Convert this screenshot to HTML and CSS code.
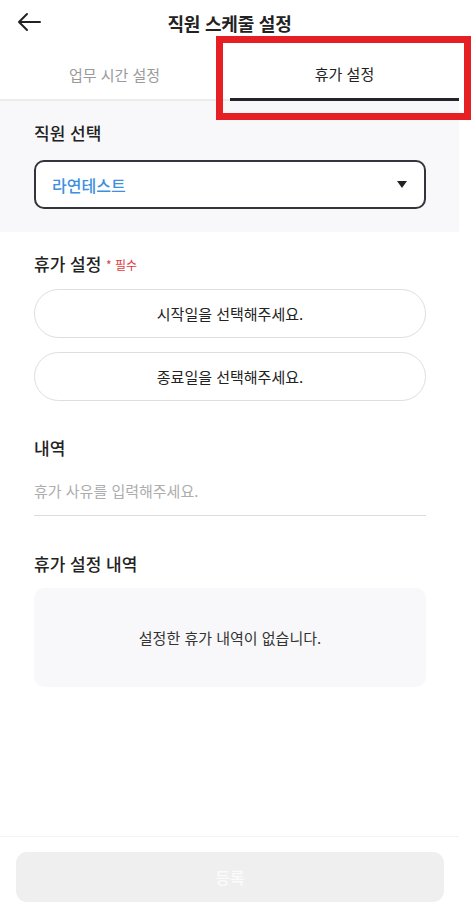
FILE: index.html
```html
<!DOCTYPE html>
<html lang="ko">
<head>
<meta charset="utf-8">
<title>직원 스케줄 설정</title>
<link rel="stylesheet" href="styles.css">
</head>
<body>
<div class="app">
  <header class="header">
    <button class="back" aria-label="뒤로">
      <svg width="24" height="20" viewBox="0 0 24 20"><path d="M23 10H2M10 2L2 10L10 18" fill="none" stroke="#222" stroke-width="2" stroke-linecap="round" stroke-linejoin="round"/></svg>
    </button>
    <h1 class="title">직원 스케줄 설정</h1>
  </header>
  <nav class="tabs">
    <div class="tab">업무 시간 설정</div>
    <div class="tab active">휴가 설정</div>
  </nav>
  <section class="staff">
    <div class="label">직원 선택</div>
    <div class="select">
      <span class="select-value">라연테스트</span>
      <span class="caret"></span>
    </div>
  </section>
  <section class="form">
    <div class="label">휴가 설정 <span class="req">* 필수</span></div>
    <div class="dates">
      <button class="date-btn">시작일을 선택해주세요.</button>
      <button class="date-btn">종료일을 선택해주세요.</button>
    </div>
    <div class="label mt">내역</div>
    <div class="reason">휴가 사유를 입력해주세요.</div>
    <div class="label mt">휴가 설정 내역</div>
    <div class="empty">설정한 휴가 내역이 없습니다.</div>
  </section>
  <footer class="footer">
    <button class="submit">등록</button>
  </footer>
</div>
<div class="highlight"></div>
</body>
</html>
```
FILE: styles.css
```css
* { box-sizing: border-box; }
html, body { margin: 0; padding: 0; background: #fff; }
body {
  width: 471px;
  height: 912px;
  position: relative;
  font-family: "Noto Sans CJK KR", "Noto Sans", sans-serif;
  color: #222;
  overflow: hidden;
}
.app {
  width: 459px;
  height: 912px;
  display: flex;
  flex-direction: column;
}
.header {
  height: 45px;
  display: flex;
  align-items: center;
  justify-content: center;
  position: relative;
}
.back {
  position: absolute;
  left: 17px;
  top: 12px;
  border: 0;
  background: none;
  padding: 0;
  width: 24px;
  height: 20px;
  display: flex;
}
.title {
  margin: 0;
  font-size: 18px;
  font-weight: 700;
  letter-spacing: -0.2px;
  line-height: 24px;
}
.tabs {
  display: flex;
  height: 56px;
  border-bottom: 2px solid #ececec;
}
.tab {
  flex: 1;
  display: flex;
  align-items: center;
  justify-content: center;
  font-size: 15px;
  color: #9a9a9a;
  padding-top: 4px;
}
.tab.active {
  color: #222;
  border-bottom: 3px solid #23232b;
  margin-bottom: -2px;
  margin-left: 1px;
}
.staff {
  background: #f8f8fa;
  padding: 20px 33px 23px 34px;
}
.label {
  font-size: 17px;
  font-weight: 500;
  line-height: 24px;
  color: #222;
}
.req {
  font-size: 12px;
  color: #e0393e;
  font-weight: 400;
  vertical-align: 1px;
}
.select {
  margin-top: 15px;
  height: 49px;
  border: 2px solid #34343c;
  border-radius: 10px;
  background: #fff;
  display: flex;
  align-items: center;
  justify-content: space-between;
  padding: 0 17px 0 16px;
}
.select-value {
  color: #3d8fe0;
  font-size: 16px;
  font-weight: 500;
}
.caret {
  width: 0;
  height: 0;
  border-left: 5px solid transparent;
  border-right: 5px solid transparent;
  border-top: 7px solid #222;
}
.form {
  padding: 20px 33px 0 34px;
  display: flex;
  flex-direction: column;
}
.label.mt { margin-top: 35px; }
.label.mt2 { margin-top: 36px; }
.dates {
  margin-top: 12px;
  display: flex;
  flex-direction: column;
  gap: 14px;
}
.date-btn {
  height: 49px;
  border: 1px solid #dedede;
  border-radius: 25px;
  background: #fff;
  font-family: inherit;
  font-size: 15px;
  color: #222;
  padding: 0;
}
.reason {
  height: 50px;
  margin-top: 6px;
  border-bottom: 1px solid #dcdcdc;
  display: flex;
  align-items: center;
  font-size: 15px;
  color: #adadad;
}
.reason + .label.mt { margin-top: 36px; }
.empty {
  margin-top: 12px;
  height: 99px;
  background: #f8f8fa;
  border-radius: 10px;
  display: flex;
  align-items: center;
  justify-content: center;
  font-size: 15px;
  color: #333;
}
.footer {
  margin-top: auto;
  border-top: 1px solid #f3f3f3;
  padding: 15px 15px 10px 16px;
}
.submit {
  width: 100%;
  height: 50px;
  border: 0;
  border-radius: 11px;
  background: #efefef;
  color: #fbfbfb;
  font-family: inherit;
  font-size: 16px;
  font-weight: 500;
}
.highlight {
  position: absolute;
  left: 216px;
  top: 36px;
  width: 255px;
  height: 84px;
  border: 7px solid #e51f24;
}
```
